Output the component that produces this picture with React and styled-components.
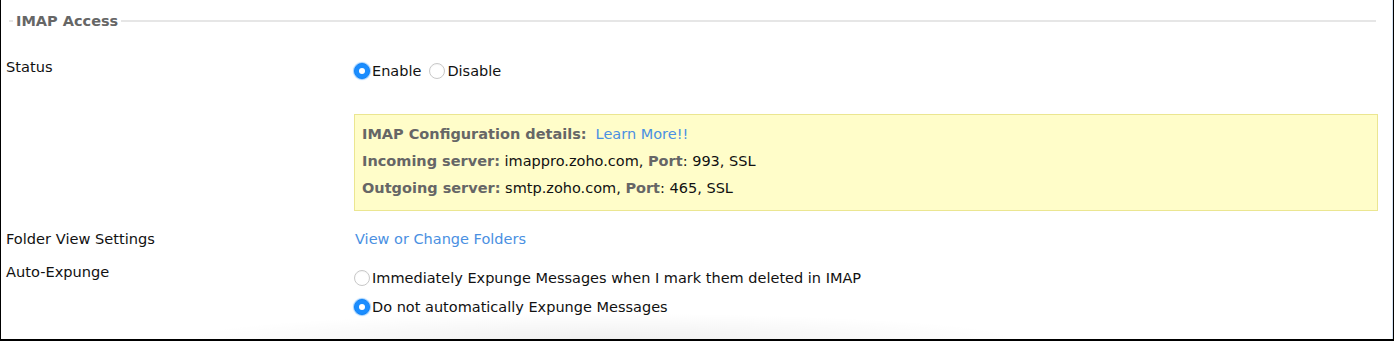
import React from 'react';
import styled, { createGlobalStyle } from 'styled-components';

const GlobalStyle = createGlobalStyle`
  html, body {
    margin: 0;
    padding: 0;
    background: #fff;
  }
  body {
    font-family: "DejaVu Sans", Verdana, sans-serif;
  }
`;

const Frame = styled.div`
  box-sizing: border-box;
  width: 1394px;
  height: 341px;
  border-left: 1px solid #000;
  border-right: 1px solid #000;
  border-bottom: 2px solid #000;
  box-shadow: inset -1px 0 0 #d3e1f3;
  background:
    radial-gradient(ellipse 420px 26px at 600px 100%, rgba(0, 0, 0, 0.06), rgba(0, 0, 0, 0) 100%),
    #fff;
  padding: 12px 17px 0 5px;
  overflow: hidden;
`;

const Legend = styled.div`
  display: flex;
  align-items: center;
  gap: 3px;
  margin-left: 3px;
  font-size: 14.5px;
  font-weight: bold;
  color: #666;
  line-height: 18px;

  &::before {
    content: '';
    width: 4px;
    height: 2px;
    background: #e6e6e6;
  }
  &::after {
    content: '';
    flex: 1;
    height: 2px;
    background: #e6e6e6;
  }
`;

const Row = styled.div`
  display: grid;
  grid-template-columns: 348px 1fr;
  margin-top: ${(p) => p.$gap}px;
`;

const Label = styled.div`
  font-size: 14.6px;
  line-height: 18px;
  color: #111;
`;

const Value = styled.div`
  display: flex;
  flex-direction: ${(p) => (p.$stack ? 'column' : 'row')};
  align-items: flex-start;
  padding-top: ${(p) => p.$offset || 0}px;
`;

const Choices = styled.div`
  display: flex;
  flex-direction: ${(p) => (p.$stack ? 'column' : 'row')};
  gap: ${(p) => (p.$stack ? 11 : 8)}px;
`;

const Choice = styled.label`
  display: flex;
  align-items: center;
  font-size: 14.5px;
  line-height: 18px;
  color: #111;
  gap: 2px;
`;

const Radio = styled.span`
  box-sizing: border-box;
  width: 16px;
  height: 16px;
  border-radius: 50%;
  display: inline-flex;
  align-items: center;
  justify-content: center;
  background: ${(p) => (p.$checked ? '#1a8dff' : '#fff')};
  border: 1px solid ${(p) => (p.$checked ? '#1584f5' : '#c8c8c8')};
  box-shadow: ${(p) => (p.$checked ? '0 0 1px 1px rgba(26, 141, 255, 0.45)' : 'inset 0 1px 1px rgba(0,0,0,0.04)')};

  &::after {
    content: '';
    display: ${(p) => (p.$checked ? 'block' : 'none')};
    width: 6px;
    height: 6px;
    border-radius: 50%;
    background: #fff;
  }
`;

const InfoBox = styled.div`
  box-sizing: border-box;
  width: 1024px;
  margin-top: 34px;
  padding: 6px 7px 8px;
  background: #fffdc9;
  border: 1px solid #ebe691;
  font-size: 14.5px;
  line-height: 27px;
  color: #111;
`;

const Key = styled.b`
  color: #666;
`;

const Link = styled.a`
  color: #4a90e2;
  text-decoration: none;
  cursor: pointer;
  margin-left: ${(p) => p.$indent || 0}px;
`;

const LinkLine = styled.span`
  font-size: 14.5px;
  line-height: 18px;
`;

function Option({ checked, children }) {
  return (
    <Choice>
      <Radio $checked={checked} />
      {children}
    </Choice>
  );
}

export default function App() {
  return (
    <>
      <GlobalStyle />
      <Frame>
        <Legend>IMAP Access</Legend>

        <Row $gap={28}>
          <Label>Status</Label>
          <Value $stack $offset={4}>
            <Choices>
              <Option checked>Enable</Option>
              <Option>Disable</Option>
            </Choices>
            <InfoBox>
              <div>
                <Key>IMAP Configuration details:</Key>
                <Link $indent={9}>Learn More!!</Link>
              </div>
              <div>
                <Key>Incoming server:</Key> imappro.zoho.com, <Key>Port</Key>: 993, SSL
              </div>
              <div>
                <Key>Outgoing server:</Key> smtp.zoho.com, <Key>Port</Key>: 465, SSL
              </div>
            </InfoBox>
          </Value>
        </Row>

        <Row $gap={19}>
          <Label>Folder View Settings</Label>
          <Value>
            <LinkLine>
              <Link $indent={1}>View or Change Folders</Link>
            </LinkLine>
          </Value>
        </Row>

        <Row $gap={15}>
          <Label>Auto-Expunge</Label>
          <Value $offset={6}>
            <Choices $stack>
              <Option>Immediately Expunge Messages when I mark them deleted in IMAP</Option>
              <Option checked>Do not automatically Expunge Messages</Option>
            </Choices>
          </Value>
        </Row>
      </Frame>
    </>
  );
}
